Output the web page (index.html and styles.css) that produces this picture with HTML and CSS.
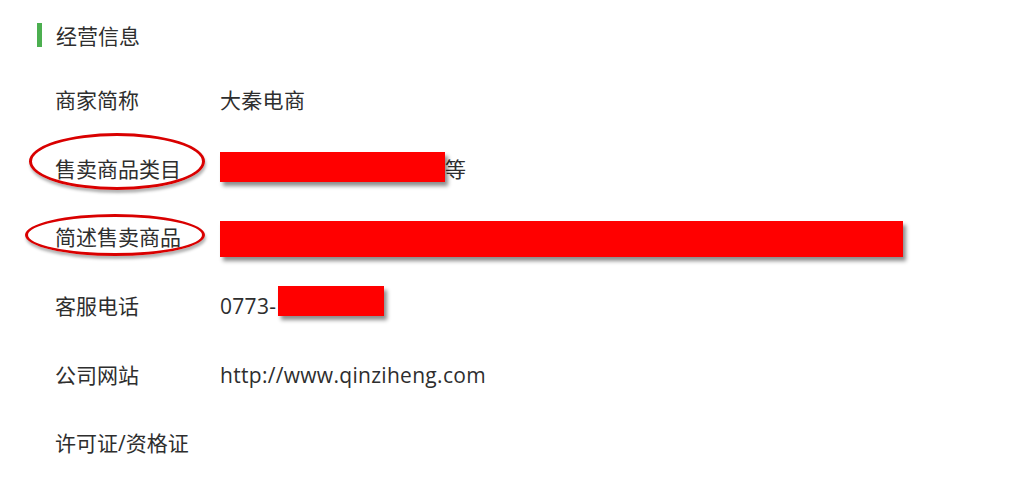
FILE: index.html
```html
<!DOCTYPE html>
<html lang="zh-CN">
<head>
<meta charset="utf-8">
<link rel="stylesheet" href="styles.css">
</head>
<body>
<div class="page">
  <h2 class="section-title"><span class="bar"></span>经营信息</h2>
  <div class="info">
    <div class="row">
      <div class="label">商家简称</div>
      <div class="value">大秦电商</div>
    </div>
    <div class="row">
      <div class="label"><span class="mark">售卖商品类目<span class="ring ring-1"></span></span></div>
      <div class="value"><span class="redact redact-1"></span>等</div>
    </div>
    <div class="row">
      <div class="label"><span class="mark">简述售卖商品<span class="ring ring-2"></span></span></div>
      <div class="value"><span class="redact redact-2"></span></div>
    </div>
    <div class="row">
      <div class="label">客服电话</div>
      <div class="value">0773-<span class="redact redact-3"></span></div>
    </div>
    <div class="row">
      <div class="label">公司网站</div>
      <div class="value">http://www.qinziheng.com</div>
    </div>
    <div class="row">
      <div class="label">许可证/资格证</div>
      <div class="value"></div>
    </div>
  </div>
</div>
</body>
</html>
```
FILE: styles.css
```css
html, body {
  margin: 0;
  padding: 0;
  background: #fff;
}
body {
  font-family: "Open Sans", "Noto Sans CJK SC", sans-serif;
  color: #2e2e2e;
  font-size: 21px;
}
.page {
  padding: 23px 0 0 37px;
}
.section-title {
  display: flex;
  align-items: center;
  height: 24px;
  margin: 0;
  font-size: 21px;
  font-weight: normal;
  color: #2e2e2e;
}
.bar {
  width: 5px;
  height: 24px;
  background: #4caf50;
  margin-right: 14px;
}
.info {
  padding-top: 19px;
  padding-left: 18px;
}
.row {
  display: grid;
  grid-template-columns: 165px 1fr;
  align-items: center;
  height: 68.6px;
}
.label, .value {
  display: flex;
  align-items: center;
  line-height: 28px;
}
.value {
  letter-spacing: 0.3px;
}
.mark {
  position: relative;
}
.ring {
  position: absolute;
  border: 3px solid #d90000;
  border-radius: 50%;
  box-shadow: 1px 3px 3px rgba(0,0,0,0.3);
  box-sizing: border-box;
}
.ring-1 {
  left: -26px;
  top: -22px;
  width: 176px;
  height: 57px;
}
.ring-2 {
  left: -30px;
  top: -9px;
  width: 180px;
  height: 42px;
}
.redact {
  display: inline-block;
  background: #ff0000;
  box-shadow: 3px 4px 4px rgba(0,0,0,0.45);
}
.redact-1 {
  width: 225px;
  height: 30px;
  position: relative;
  top: -2px;
}
.redact-2 {
  width: 683px;
  height: 36px;
  position: relative;
  top: 2px;
}
.redact-3 {
  width: 106px;
  height: 30px;
  margin-left: 2px;
  position: relative;
  top: -5px;
}
```
